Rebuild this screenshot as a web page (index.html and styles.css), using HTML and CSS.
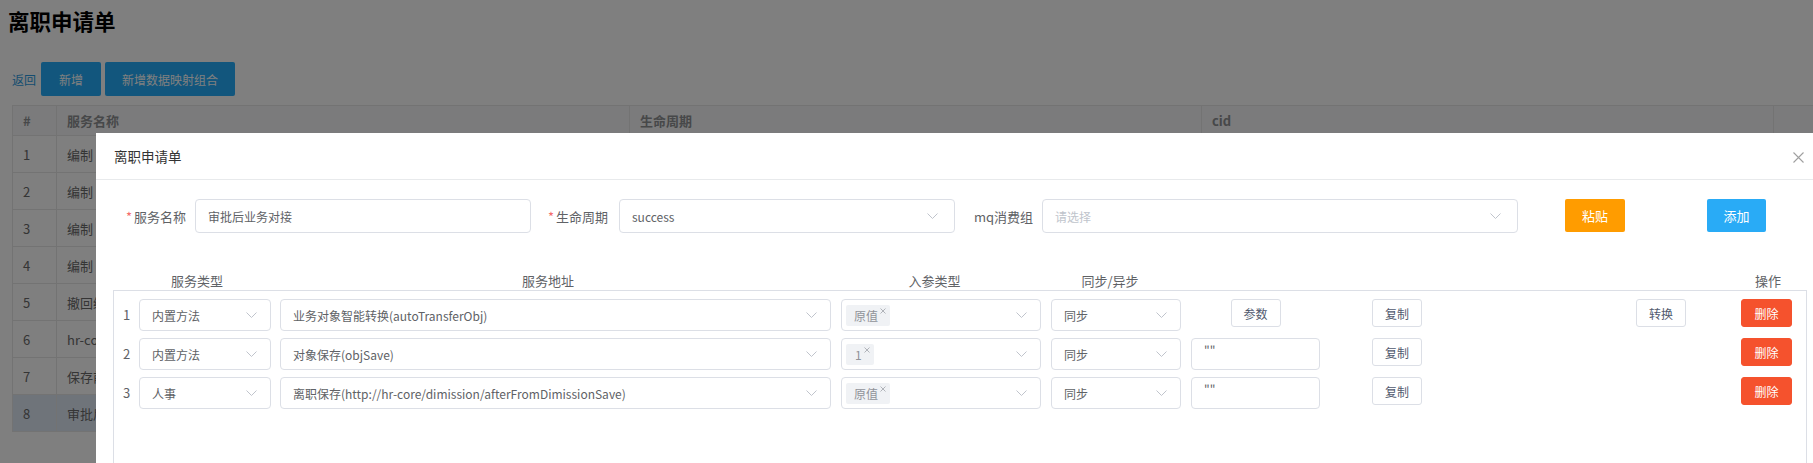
FILE: index.html
```html
<!DOCTYPE html>
<html lang="zh-CN">
<head>
<meta charset="utf-8">
<title>离职申请单</title>
<link rel="stylesheet" href="styles.css">
</head>
<body>
<div class="page">
  <h1 class="page-title">离职申请单</h1>
  <div class="toolbar">
    <a class="back-link">返回</a>
    <button class="tb-btn btn-add">新增</button>
    <button class="tb-btn btn-map">新增数据映射组合</button>
  </div>
  <table class="bg-table">
    <thead>
      <tr><th class="c-idx">#</th><th class="c-name">服务名称</th><th class="c-life">生命周期</th><th class="c-cid">cid</th><th class="c-last"></th></tr>
    </thead>
    <tbody>
      <tr><td>1</td><td>编制</td><td></td><td></td><td></td></tr>
      <tr><td>2</td><td>编制</td><td></td><td></td><td></td></tr>
      <tr><td>3</td><td>编制</td><td></td><td></td><td></td></tr>
      <tr><td>4</td><td>编制</td><td></td><td></td><td></td></tr>
      <tr><td>5</td><td>撤回编制</td><td></td><td></td><td></td></tr>
      <tr><td>6</td><td>hr-core</td><td></td><td></td><td></td></tr>
      <tr><td>7</td><td>保存前校验</td><td></td><td></td><td></td></tr>
      <tr class="row-current"><td>8</td><td>审批后业务对接</td><td></td><td></td><td></td></tr>
    </tbody>
  </table>
</div>

<div class="mask"></div>

<div class="modal">
  <div class="modal-header">
    <span class="modal-title">离职申请单</span>
    <svg class="modal-close" width="11" height="11" viewBox="0 0 11 11"><path d="M0.5 0.5 L10.5 10.5 M10.5 0.5 L0.5 10.5" stroke="#a0a0a0" stroke-width="1.1" fill="none"/></svg>
  </div>
  <div class="modal-body">
    <div class="form-row">
      <label class="f-label f-label-1"><span class="req">*</span>服务名称</label>
      <div class="f-input f-input-1">审批后业务对接</div>
      <label class="f-label f-label-2"><span class="req">*</span>生命周期</label>
      <div class="f-input f-select f-input-2"><span>success</span><svg class="chev" width="11" height="6" viewBox="0 0 11 6"><polyline points="0.5,0.5 5.5,5.5 10.5,0.5" fill="none" stroke="#c0c4cc" stroke-width="1"/></svg></div>
      <label class="f-label f-label-3">mq消费组</label>
      <div class="f-input f-select f-input-3"><span class="placeholder">请选择</span><svg class="chev" width="11" height="6" viewBox="0 0 11 6"><polyline points="0.5,0.5 5.5,5.5 10.5,0.5" fill="none" stroke="#c0c4cc" stroke-width="1"/></svg></div>
      <button class="f-btn btn-paste">粘贴</button>
      <button class="f-btn btn-append">添加</button>
    </div>

    <div class="col-heads">
      <span class="ch ch-type">服务类型</span>
      <span class="ch ch-addr">服务地址</span>
      <span class="ch ch-param">入参类型</span>
      <span class="ch ch-sync">同步/异步</span>
      <span class="ch ch-op">操作</span>
    </div>

    <div class="rows-box">
      <div class="s-row">
        <span class="num">1</span>
        <div class="sel sel-type"><span>内置方法</span><svg class="chev" width="11" height="6" viewBox="0 0 11 6"><polyline points="0.5,0.5 5.5,5.5 10.5,0.5" fill="none" stroke="#c0c4cc" stroke-width="1"/></svg></div>
        <div class="sel sel-addr"><span>业务对象智能转换(autoTransferObj)</span><svg class="chev" width="11" height="6" viewBox="0 0 11 6"><polyline points="0.5,0.5 5.5,5.5 10.5,0.5" fill="none" stroke="#c0c4cc" stroke-width="1"/></svg></div>
        <div class="sel sel-param"><span class="tag">原值<svg class="tag-x" width="6" height="6" viewBox="0 0 6 6"><path d="M0.5 0.5 L5.5 5.5 M5.5 0.5 L0.5 5.5" stroke="#a8abb2" stroke-width="0.9" fill="none"/></svg></span><svg class="chev" width="11" height="6" viewBox="0 0 11 6"><polyline points="0.5,0.5 5.5,5.5 10.5,0.5" fill="none" stroke="#c0c4cc" stroke-width="1"/></svg></div>
        <div class="sel sel-sync"><span>同步</span><svg class="chev" width="11" height="6" viewBox="0 0 11 6"><polyline points="0.5,0.5 5.5,5.5 10.5,0.5" fill="none" stroke="#c0c4cc" stroke-width="1"/></svg></div>
        <div class="extra"><button class="r-btn">参数</button></div>
        <button class="r-btn btn-copy">复制</button>
        <button class="r-btn btn-convert">转换</button>
        <button class="r-btn btn-del">删除</button>
      </div>
      <div class="s-row">
        <span class="num">2</span>
        <div class="sel sel-type"><span>内置方法</span><svg class="chev" width="11" height="6" viewBox="0 0 11 6"><polyline points="0.5,0.5 5.5,5.5 10.5,0.5" fill="none" stroke="#c0c4cc" stroke-width="1"/></svg></div>
        <div class="sel sel-addr"><span>对象保存(objSave)</span><svg class="chev" width="11" height="6" viewBox="0 0 11 6"><polyline points="0.5,0.5 5.5,5.5 10.5,0.5" fill="none" stroke="#c0c4cc" stroke-width="1"/></svg></div>
        <div class="sel sel-param"><span class="tag tag-short">1<svg class="tag-x" width="6" height="6" viewBox="0 0 6 6"><path d="M0.5 0.5 L5.5 5.5 M5.5 0.5 L0.5 5.5" stroke="#a8abb2" stroke-width="0.9" fill="none"/></svg></span><svg class="chev" width="11" height="6" viewBox="0 0 11 6"><polyline points="0.5,0.5 5.5,5.5 10.5,0.5" fill="none" stroke="#c0c4cc" stroke-width="1"/></svg></div>
        <div class="sel sel-sync"><span>同步</span><svg class="chev" width="11" height="6" viewBox="0 0 11 6"><polyline points="0.5,0.5 5.5,5.5 10.5,0.5" fill="none" stroke="#c0c4cc" stroke-width="1"/></svg></div>
        <div class="extra"><div class="txt-input">""</div></div>
        <button class="r-btn btn-copy">复制</button>
        <button class="r-btn btn-del">删除</button>
      </div>
      <div class="s-row">
        <span class="num">3</span>
        <div class="sel sel-type"><span>人事</span><svg class="chev" width="11" height="6" viewBox="0 0 11 6"><polyline points="0.5,0.5 5.5,5.5 10.5,0.5" fill="none" stroke="#c0c4cc" stroke-width="1"/></svg></div>
        <div class="sel sel-addr"><span>离职保存(http://hr-core/dimission/afterFromDimissionSave)</span><svg class="chev" width="11" height="6" viewBox="0 0 11 6"><polyline points="0.5,0.5 5.5,5.5 10.5,0.5" fill="none" stroke="#c0c4cc" stroke-width="1"/></svg></div>
        <div class="sel sel-param"><span class="tag">原值<svg class="tag-x" width="6" height="6" viewBox="0 0 6 6"><path d="M0.5 0.5 L5.5 5.5 M5.5 0.5 L0.5 5.5" stroke="#a8abb2" stroke-width="0.9" fill="none"/></svg></span><svg class="chev" width="11" height="6" viewBox="0 0 11 6"><polyline points="0.5,0.5 5.5,5.5 10.5,0.5" fill="none" stroke="#c0c4cc" stroke-width="1"/></svg></div>
        <div class="sel sel-sync"><span>同步</span><svg class="chev" width="11" height="6" viewBox="0 0 11 6"><polyline points="0.5,0.5 5.5,5.5 10.5,0.5" fill="none" stroke="#c0c4cc" stroke-width="1"/></svg></div>
        <div class="extra"><div class="txt-input">""</div></div>
        <button class="r-btn btn-copy">复制</button>
        <button class="r-btn btn-del">删除</button>
      </div>
    </div>
  </div>
</div>
</body>
</html>
```

FILE: styles.css
```css
* { box-sizing: border-box; }

html, body {
  margin: 0;
  padding: 0;
  width: 1813px;
  height: 463px;
  overflow: hidden;
  background: #ffffff;
  font-family: "Noto Sans CJK SC", "Noto Sans", sans-serif;
  color: #606266;
}

button {
  font-family: inherit;
  cursor: pointer;
}

/* ---------- background page ---------- */
.page {
  padding: 6px 0 0 12px;
  height: 463px;
  overflow: hidden;
}

.page-title {
  margin: 0 0 0 -4px;
  font-size: 21.5px;
  line-height: 30px;
  font-weight: 700;
  color: #000000;
}

.toolbar {
  display: flex;
  align-items: center;
  margin-top: 26px;
  height: 34px;
}

.back-link {
  font-size: 12px;
  color: #2b9be0;
  margin-right: 5px;
}

.tb-btn {
  height: 34px;
  border: none;
  border-radius: 2px;
  background: #24adfa;
  color: #ffffff;
  font-size: 12px;
  padding: 0;
}

.btn-add { width: 60px; }
.btn-map { width: 130px; margin-left: 4px; }

.bg-table {
  margin-top: 9px;
  border-collapse: collapse;
  table-layout: fixed;
  width: 1820px;
  font-size: 13px;
}

.bg-table th,
.bg-table td {
  border: 1px solid #e6e6e6;
  text-align: left;
  padding: 0 0 0 10px;
  white-space: nowrap;
  overflow: hidden;
}

.bg-table th {
  height: 30px;
  background: #f6f7f8;
  color: #8e9093;
  font-weight: 700;
}

.bg-table td {
  height: 37px;
  color: #6a6a6a;
}

.c-idx { width: 44px; }
.c-name { width: 573px; }
.c-life { width: 572px; }
.c-cid { width: 572px; }

.row-current td { background: #dfe9f5; }

.mask {
  position: fixed;
  inset: 0;
  background: rgba(0, 0, 0, 0.5);
}

/* ---------- modal ---------- */
.modal {
  position: absolute;
  left: 96px;
  top: 133px;
  bottom: 0;
  width: 1717px;
  overflow: hidden;
  background: #ffffff;
}

.modal-header {
  height: 47px;
  border-bottom: 1px solid #e8eaec;
  display: flex;
  align-items: center;
  padding-left: 18px;
}

.modal-title {
  font-size: 13.5px;
  color: #333333;
}

.modal-close {
  position: absolute;
  left: 1697px;
  top: 19px;
}

.modal-body {
  padding: 19px 0 0 17px;
}

.form-row {
  display: flex;
  align-items: center;
  height: 34px;
  padding-left: 13px;
}

.f-label {
  font-size: 13px;
  color: #606266;
  text-align: right;
  white-space: nowrap;
}

.req {
  color: #f56c6c;
  margin-right: 2px;
}

.f-label-1 { width: 59px; margin-right: 10px; }
.f-label-2 { width: 60px; margin-left: 17px; margin-right: 11px; }
.f-label-3 { width: 57px; margin-left: 19px; margin-right: 11px; }

.f-input {
  height: 34px;
  border: 1px solid #dcdfe6;
  border-radius: 4px;
  padding: 0 16px 0 12px;
  display: flex;
  align-items: center;
  justify-content: space-between;
  font-size: 12px;
  color: #606266;
}

.f-input-1 { width: 336px; }
.f-input-2 { width: 336px; }
.f-input-3 { width: 476px; }

.placeholder { color: #c0c4cc; }

.f-btn {
  height: 33px;
  border: none;
  border-radius: 2px;
  color: #ffffff;
  font-size: 13px;
  padding: 0;
  margin-top: -2px;
}

.btn-paste { width: 60px; margin-left: 47px; background: #ff9c00; }
.btn-append { width: 59px; margin-left: 82px; background: #29abf6; }

/* column headings */
.col-heads {
  display: flex;
  width: 1694px;
  margin-top: 39px;
  height: 18px;
  line-height: 18px;
  font-size: 13px;
  color: #606266;
}

.ch { text-align: center; white-space: nowrap; }
.ch-type { width: 168px; }
.ch-addr { width: 534px; }
.ch-param { width: 239px; }
.ch-sync { width: 112px; }
.ch-op { width: 26px; margin-left: auto; margin-right: 26px; }

/* rows box */
.rows-box {
  width: 1694px;
  height: 200px;
  border: 1px solid #dcdfe6;
  border-bottom: none;
  padding: 8px 14px 0 0;
}

.s-row {
  display: flex;
  align-items: flex-start;
  height: 32px;
  margin-bottom: 7px;
}

.num {
  width: 25px;
  line-height: 32px;
  text-align: center;
  font-size: 13px;
  color: #606266;
}

.sel {
  height: 32px;
  border: 1px solid #dcdfe6;
  border-radius: 4px;
  display: flex;
  align-items: center;
  justify-content: space-between;
  padding: 0 13px 0 12px;
  font-size: 12px;
  color: #606266;
  white-space: nowrap;
}

.sel-type { width: 132px; }
.sel-addr { width: 551px; margin-left: 9px; }
.sel-param { width: 200px; margin-left: 10px; padding-left: 4px; }
.sel-sync { width: 130px; margin-left: 10px; }

.tag {
  height: 21px;
  background: #f0f2f5;
  border-radius: 2px;
  display: inline-flex;
  align-items: center;
  padding: 0 4px 0 8px;
  font-size: 12px;
  color: #909399;
}

.tag-short { padding-left: 9px; }

.tag-x {
  margin-left: 2px;
  align-self: flex-start;
  margin-top: 3px;
}

.extra {
  width: 129px;
  margin-left: 10px;
  display: flex;
  justify-content: center;
}

.txt-input {
  width: 129px;
  height: 32px;
  border: 1px solid #dcdfe6;
  border-radius: 4px;
  padding: 4px 0 0 12px;
  font-size: 12px;
  line-height: 16px;
  color: #606266;
}

.r-btn {
  width: 50px;
  height: 28px;
  border: 1px solid #dcdfe6;
  border-radius: 3px;
  background: #ffffff;
  color: #515a6e;
  font-size: 12px;
  padding: 0;
}

.btn-copy { margin-left: 52px; }
.btn-convert { margin-left: 214px; }

.btn-del {
  width: 51px;
  margin-left: auto;
  background: #f5522d;
  border-color: #f5522d;
  color: #ffffff;
}
```
